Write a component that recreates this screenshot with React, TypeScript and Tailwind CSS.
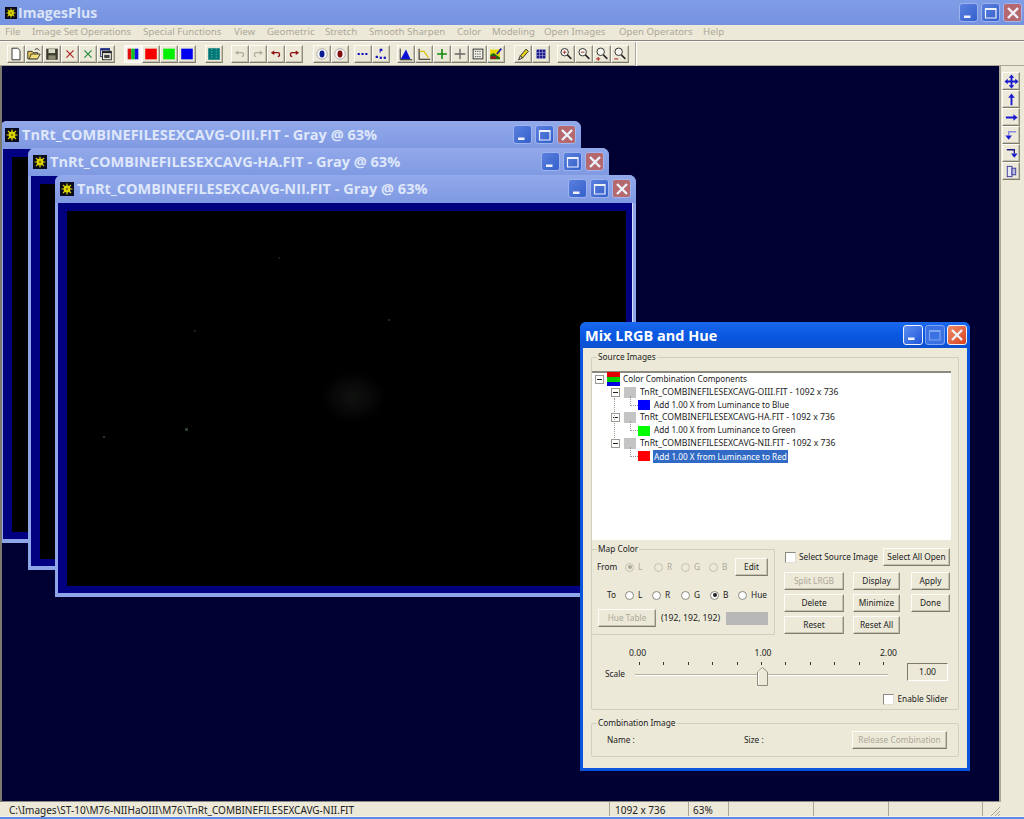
import React from "react";

const ui = "font-['Noto_Sans','Liberation_Sans',sans-serif]";
const title = "font-['Open_Sans','Liberation_Sans',sans-serif] font-bold";

function Sun({ className }: { className: string }) {
  return (
    <svg viewBox="0 0 14 14" className={className}>
      <rect width="14" height="14" fill="#0b0b20" />
      <circle cx="7" cy="7" r="3.4" fill="#e8e000" />
      <g stroke="#d8d000" strokeWidth="1.2">
        <path d="M7 1.5V12.5M1.5 7H12.5M3 3L11 11M11 3L3 11" />
      </g>
      <circle cx="7" cy="7" r="1.2" fill="#8a8200" />
    </svg>
  );
}

function CapBtn({ kind, variant }: { kind: "min" | "max" | "close"; variant: "main" | "child" | "dialog" }) {
  const base =
    "flex items-center justify-center rounded-[3px] border " +
    (variant === "dialog" ? "w-[20px] h-[20px] " : "w-[19px] h-[19px] ");
  const look =
    variant === "dialog"
      ? kind === "close"
        ? "bg-gradient-to-br from-[#ee8a66] to-[#d8401c] border-[#f2f2f2]"
        : kind === "max"
          ? "bg-[#3a72e4] border-[#7ea4f0]"
          : "bg-gradient-to-br from-[#5d8ef2] to-[#1f55d8] border-[#f2f2f2]"
      : kind === "close"
        ? "bg-[#b5696f] border-[#a4b6ec]"
        : "bg-gradient-to-br from-[#5a80de] to-[#3560cc] border-[#9db3ee]";
  const ink = variant === "dialog" && kind === "max" ? "#7ea4f0" : "#eef1fa";
  return (
    <div className={base + look}>
      <svg viewBox="0 0 16 16" className="w-[16px] h-[16px]">
        {kind === "min" && <rect x="3" y="10.5" width="6.5" height="2.5" fill={ink} />}
        {kind === "max" && (
          <path d="M2.5 3.5H13V13H2.5Z M2.5 4.5H13" fill="none" stroke={ink} strokeWidth="1.2" />
        )}
        {kind === "max" && <rect x="2.5" y="3" width="10.5" height="2" fill={ink} />}
        {kind === "close" && <path d="M3 3L13 13M13 3L3 13" stroke={ink} strokeWidth="2.4" />}
      </svg>
    </div>
  );
}

function Raised({ className, children }: { className: string; children?: React.ReactNode }) {
  return (
    <div
      className={
        "flex items-center justify-center bg-[#ece9d8] border border-t-[#fdfcf6] border-l-[#fdfcf6] border-r-[#8e8c7e] border-b-[#7c7a6c] shadow-[inset_-1px_-1px_0_#c6c3b0] " +
        className
      }
    >
      {children}
    </div>
  );
}

type IconName =
  | "new" | "open" | "save" | "xr" | "xg" | "win" | "rgb" | "red" | "green" | "blue" | "teal"
  | "ug" | "rg" | "ur" | "rr" | "eb" | "er" | "dots" | "pdots" | "hist" | "curve" | "plus"
  | "cross" | "calc" | "pic" | "pen" | "grid" | "zi" | "zo" | "zi2" | "zo2";

function Undo({ c, flip }: { c: string; flip?: boolean }) {
  return (
    <g transform={flip ? "translate(18 0) scale(-1 1)" : undefined}>
      <path d="M5 7.5H11C13.5 7.5 14 11.5 11 12" fill="none" stroke={c} strokeWidth="1.5" />
      <path d="M3.2 7.5L7 5V10Z" fill={c} />
    </g>
  );
}

function Zoom({ sign, low }: { sign: "+" | "-"; low?: boolean }) {
  const c = "#a82828";
  return (
    <g>
      <circle cx="7.5" cy={low ? 6.5 : 7} r="4.2" fill="#f7f7f2" stroke="#222" strokeWidth="1" />
      <path d="M10.5 10L15 14.5" stroke="#222" strokeWidth="1.7" />
      {!low && <path d="M5.5 7H9.5" stroke={c} strokeWidth="1" />}
      {!low && sign === "+" && <path d="M7.5 5V9" stroke={c} strokeWidth="1" />}
      {low && <path d="M2.5 14.5H7" stroke={c} strokeWidth="1.2" />}
      {low && sign === "+" && <path d="M4.75 12.3V16.5" stroke={c} strokeWidth="1.2" />}
    </g>
  );
}

function ToolIcon({ n }: { n: IconName }) {
  switch (n) {
    case "new":
      return <path d="M4.5 2.5H11L13.5 5V15.5H4.5Z" fill="#fff" stroke="#222" />;
    case "open":
      return (
        <g>
          <path d="M2 6H7L8 7.5H13V14.5H2Z" fill="#e0c050" stroke="#333" />
          <path d="M3.5 14.5L6 9H16L13 14.5Z" fill="#f2dd78" stroke="#333" />
          <path d="M10 4C12 2.5 14 3 15 5" fill="none" stroke="#222" />
        </g>
      );
    case "save":
      return (
        <g>
          <rect x="2.5" y="3" width="13" height="12.5" fill="#3a3a2c" />
          <rect x="5" y="3.5" width="7.5" height="4.5" fill="#d8d8c8" />
          <rect x="5" y="10.5" width="8" height="5" fill="#8a8a70" />
        </g>
      );
    case "xr":
      return <path d="M5 5L13 13M13 5L5 13" stroke="#a82020" strokeWidth="1.3" />;
    case "xg":
      return <path d="M5 5L13 13M13 5L5 13" stroke="#1c8a3a" strokeWidth="1.3" />;
    case "win":
      return (
        <g>
          <rect x="3" y="3" width="10" height="9" fill="#e8e8e0" stroke="#1c2a6a" />
          <rect x="3" y="3" width="10" height="2" fill="#1c2a8a" />
          <rect x="5" y="6" width="10" height="9.5" fill="#e8e8e0" stroke="#222" />
          <rect x="5" y="6" width="10" height="2" fill="#222" />
          <rect x="7" y="10" width="6" height="3.5" fill="#444" />
        </g>
      );
    case "rgb":
      return (
        <g>
          <rect x="3" y="3" width="4" height="12" fill="#e01010" />
          <rect x="7" y="3" width="4" height="12" fill="#10c020" />
          <rect x="11" y="3" width="4" height="12" fill="#1010e0" />
        </g>
      );
    case "red":
      return <rect x="2.5" y="3" width="13" height="12" fill="#f80000" />;
    case "green":
      return <rect x="2.5" y="3" width="13" height="12" fill="#00f000" />;
    case "blue":
      return <rect x="2.5" y="3" width="13" height="12" fill="#0000f0" />;
    case "teal":
      return (
        <g>
          <rect x="2.5" y="2.5" width="13" height="13" fill="#007878" />
          <path d="M6.5 3V15M11.5 3V15" stroke="#9ad0d0" strokeDasharray="1 2" />
        </g>
      );
    case "ug":
      return <Undo c="#b0ad9f" />;
    case "rg":
      return <Undo c="#b0ad9f" flip />;
    case "ur":
      return <Undo c="#8a1010" />;
    case "rr":
      return <Undo c="#8a1010" flip />;
    case "eb":
      return (
        <g>
          <circle cx="9" cy="9" r="6" fill="#f4f4f4" stroke="#aaa" />
          <ellipse cx="9" cy="9" rx="2.8" ry="3.8" fill="#0a1a90" />
        </g>
      );
    case "er":
      return (
        <g>
          <circle cx="9" cy="9" r="6" fill="#f4f4f4" stroke="#aaa" />
          <ellipse cx="9" cy="9" rx="2.8" ry="3.8" fill="#800a0a" />
        </g>
      );
    case "dots":
      return <path d="M3 9H15" stroke="#1010c0" strokeWidth="2" strokeDasharray="2.4 1.9" />;
    case "pdots":
      return (
        <g fill="#1010c0">
          <path d="M7.5 3H10.5V5.5H8.5V7.5H7.5Z" />
          <rect x="3" y="11" width="2.5" height="2.5" />
          <rect x="7.5" y="12" width="2.5" height="2.5" />
          <rect x="12" y="12" width="2.5" height="2.5" />
        </g>
      );
    case "hist":
      return (
        <g>
          <path d="M3 15L9 4L14 15Z" fill="#0810d8" />
          <path d="M2.5 3V15.5H16" fill="none" stroke="#111" />
        </g>
      );
    case "curve":
      return (
        <g>
          <path d="M3.5 3V15H16" fill="none" stroke="#222" strokeWidth="1.2" />
          <path d="M4 6H9L14 13" fill="none" stroke="#d8c000" strokeWidth="1.3" />
        </g>
      );
    case "plus":
      return <path d="M9 3.5V14.5M3.5 9H14.5" stroke="#128a12" strokeWidth="1.8" />;
    case "cross":
      return <path d="M9 3V15M3 9H15" stroke="#666" strokeWidth="1.5" />;
    case "calc":
      return (
        <g>
          <rect x="3.5" y="3.5" width="11" height="11" fill="#f2f2ea" stroke="#222" />
          <path d="M5.5 6H12.5M5.5 9H12.5M5.5 12H12.5" stroke="#333" strokeDasharray="1.5 1" />
        </g>
      );
    case "pic":
      return (
        <g>
          <rect x="2.5" y="4" width="11" height="11" fill="#e8d800" />
          <path d="M2.5 15V10L6 8L13.5 13V15Z" fill="#186818" />
          <rect x="3" y="11.5" width="6" height="3" fill="#a01030" />
          <path d="M10 9L15 3" stroke="#2020a0" strokeWidth="2" />
        </g>
      );
    case "pen":
      return (
        <g>
          <path d="M6 11L12.5 3.5L15 6L8.5 13.5Z" fill="#e8d020" stroke="#222" />
          <path d="M6 11L4 15.5L8.5 13.5Z" fill="#f4e8c0" stroke="#222" />
        </g>
      );
    case "grid":
      return (
        <g>
          <rect x="4" y="4" width="10" height="10" fill="#1a1a90" />
          <path d="M7.3 4V14M10.6 4V14M4 7.3H14M4 10.6H14" stroke="#a8a8d8" strokeWidth=".7" />
        </g>
      );
    case "zi":
      return <Zoom sign="+" />;
    case "zo":
      return <Zoom sign="-" />;
    case "zi2":
      return <Zoom sign="+" low />;
    case "zo2":
      return <Zoom sign="-" low />;
  }
}

function ToolBtn({ n, pressed }: { n: IconName; pressed?: boolean }) {
  return (
    <Raised
      className={
        "w-[18px] h-[18px] " +
        (pressed ? "border-t-[#8e8c7e] border-l-[#8e8c7e] border-r-[#fdfcf6] border-b-[#fdfcf6] shadow-none bg-[#f6f5ee]" : "")
      }
    >
      <svg viewBox="0 0 18 18" className="w-[16px] h-[16px]">
        <ToolIcon n={n} />
      </svg>
    </Raised>
  );
}

const groups: { names: IconName[]; cls: string }[] = [
  { names: ["new", "open", "save", "xr", "xg", "win"], cls: "ml-[7px]" },
  { names: ["rgb", "red", "green", "blue"], cls: "ml-[9px]" },
  { names: ["teal"], cls: "ml-[9px]" },
  { names: ["ug", "rg", "ur", "rr"], cls: "ml-[8px]" },
  { names: ["eb", "er"], cls: "ml-[10px]" },
  { names: ["dots", "pdots"], cls: "ml-[5px]" },
  { names: ["hist", "curve", "plus", "cross", "calc", "pic"], cls: "ml-[7px]" },
  { names: ["pen", "grid"], cls: "ml-[9px]" },
  { names: ["zi", "zo", "zi2", "zo2"], cls: "ml-[7px]" },
];

const menus: [string, string][] = [
  ["File", "w-[27px]"],
  ["Image Set Operations", "w-[111px]"],
  ["Special Functions", "w-[91px]"],
  ["View", "w-[33px]"],
  ["Geometric", "w-[58px]"],
  ["Stretch", "w-[44px]"],
  ["Smooth Sharpen", "w-[88px]"],
  ["Color", "w-[35px]"],
  ["Modeling", "w-[52px]"],
  ["Open Images", "w-[75px]"],
  ["Open Operators", "w-[84px]"],
  ["Help", "w-[30px]"],
];

function ChildWindow({ name, pos, image }: { name: string; pos: string; image?: boolean }) {
  return (
    <div className={"absolute w-[581px] h-[422px] rounded-t-[7px] bg-[#8ea6e8] flex flex-col px-[3px] pb-[4px] " + pos}>
      <div className="h-[28px] shrink-0 flex items-center bg-gradient-to-b from-[#92a9ea] to-[#7f99e2] -mx-[3px] px-[5px] rounded-t-[7px]">
        <Sun className="w-[14px] h-[14px] shrink-0" />
        <span className={"ml-[3px] text-[14.5px] leading-none whitespace-nowrap text-[#dfe7fa] " + title}>{name}</span>
        <div className="ml-auto flex gap-[3px] -mt-[1px]">
          <CapBtn kind="min" variant="child" />
          <CapBtn kind="max" variant="child" />
          <CapBtn kind="close" variant="child" />
        </div>
      </div>
      <div className="flex-1 min-h-0 bg-[#000080] border-r border-r-[#d8e0f6] pt-[8px] pb-[7px] pl-[9px] pr-[6px] flex">
        <div className="relative flex-1 bg-black overflow-hidden">
          {image && (
            <svg viewBox="0 0 557 375" className="absolute inset-0 w-full h-full">
              <defs>
                <radialGradient id="neb">
                  <stop offset="0" stopColor="#101210" />
                  <stop offset="1" stopColor="#000" />
                </radialGradient>
              </defs>
              <ellipse cx="285" cy="186" rx="32" ry="26" fill="url(#neb)" />
              <rect x="117" y="217" width="3" height="3" fill="#2e3e2e" />
              <rect x="35" y="225" width="2" height="2" fill="#2a302a" />
              <rect x="320" y="108" width="2" height="2" fill="#262626" />
              <rect x="210" y="46" width="2" height="2" fill="#1a1a1a" />
              <rect x="126" y="119" width="2" height="2" fill="#1c1c1c" />
            </svg>
          )}
        </div>
      </div>
    </div>
  );
}

function Group({ label, className, children }: { label: string; className: string; children?: React.ReactNode }) {
  return (
    <div className={"relative border border-[#d0d0bf] rounded-[2px] " + className}>
      <span className="absolute left-[5px] -top-[7px] bg-[#ece9d8] px-[1px] text-[8.3px] leading-[12px] text-[#222]">{label}</span>
      {children}
    </div>
  );
}

function Btn({ label, w, off, ml }: { label: string; w: string; off?: boolean; ml?: string }) {
  return (
    <Raised className={"h-[18px] text-[8.3px] leading-none whitespace-nowrap " + w + " " + (ml ?? "") + (off ? " text-[#aca899]" : " text-[#222]")}>
      {label}
    </Raised>
  );
}

function Radio({ label, on, off, gap }: { label: string; on?: boolean; off?: boolean; gap: string }) {
  return (
    <div className={"flex items-center text-[8.3px] leading-none " + gap + (off ? " text-[#aca899]" : " text-[#222]")}>
      <div className={"w-[9px] h-[9px] rounded-full border flex items-center justify-center " + (off ? "border-[#c4c1b0] bg-[#ece9d8]" : "border-[#8a8a80] bg-white")}>
        {on && <div className={"w-[4px] h-[4px] rounded-full " + (off ? "bg-[#aca899]" : "bg-[#222]")} />}
      </div>
      <span className="ml-[4px]">{label}</span>
    </div>
  );
}

function Check({ label, cls }: { label: string; cls: string }) {
  return (
    <div className={"flex items-center text-[8.3px] leading-none text-[#222] " + cls}>
      <div className="w-[11px] h-[11px] shrink-0 bg-white border border-[#8a8a80] border-b-[#e0dfd4] border-r-[#e0dfd4]" />
      <span className="ml-[3px] whitespace-nowrap">{label}</span>
    </div>
  );
}

function Expander() {
  return (
    <div className="w-[9px] h-[9px] border border-[#9a9a90] bg-white flex items-center justify-center shrink-0">
      <div className="w-[5px] h-[1px] bg-[#222]" />
    </div>
  );
}

function TreeFile({ text }: { text: string }) {
  return (
    <div className="h-[12.8px] flex items-center pl-[19px]">
      <Expander />
      <div className="ml-[4px] w-[12px] h-[11px] bg-[#c4c4c4] shrink-0" />
      <span className="ml-[4px] text-[8.65px] whitespace-nowrap">{text}</span>
    </div>
  );
}

function TreeAdd({ text, swatch, selected }: { text: string; swatch: string; selected?: boolean }) {
  return (
    <div className="relative h-[12.8px] flex items-center pl-[46px]">
      <div className="absolute left-[38px] -top-[3px] w-[8px] h-[10px] border-l border-b border-dotted border-[#9a9a90]" />
      <div className={"w-[12px] h-[10px] shrink-0 " + swatch} />
      <span className={"ml-[3px] px-[1px] whitespace-nowrap " + (selected ? "bg-[#316ac5] text-white leading-[13px]" : "")}>{text}</span>
    </div>
  );
}

function Dialog() {
  return (
    <div className={"absolute left-[578px] top-[256px] w-[390px] h-[449px] bg-[#0b55dc] rounded-t-[6px] flex flex-col px-[3px] pb-[3px] " + ui}>
      <div className="h-[26px] shrink-0 flex items-center -mx-[3px] pl-[5px] pr-[3px] rounded-t-[6px] bg-gradient-to-b from-[#1a68ee] via-[#0a58e2] to-[#0b50d0]">
        <span className={"mt-[3px] text-[14.5px] leading-none text-white whitespace-nowrap " + title}>Mix LRGB and Hue</span>
        <div className="ml-auto flex gap-[2px]">
          <CapBtn kind="min" variant="dialog" />
          <CapBtn kind="max" variant="dialog" />
          <CapBtn kind="close" variant="dialog" />
        </div>
      </div>
      <div className="flex-1 bg-[#ece9d8] pl-[8px] pr-[8px] pt-[9px] flex flex-col">
        <Group label="Source Images" className="h-[353px] pt-[13px] pr-[7px] flex flex-col">
          <div className="relative h-[169px] shrink-0 bg-white border-t-2 border-t-[#8a8a80] text-[8.2px] text-[#222]">
            <div className="absolute left-[22px] top-[25px] h-[42px] border-l border-dotted border-l-[#9a9a90]" />
            <div className="h-[12.8px] flex items-center pl-[3px]">
              <Expander />
              <div className="ml-[3px] w-[13px] h-[14px] shrink-0 flex flex-col">
                <div className="flex-1 bg-[#e00000]" />
                <div className="flex-1 bg-[#00d000]" />
                <div className="flex-1 bg-[#0000e0]" />
              </div>
              <span className="ml-[3px] whitespace-nowrap">Color Combination Components</span>
            </div>
            <TreeFile text="TnRt_COMBINEFILESEXCAVG-OIII.FIT - 1092 x 736" />
            <TreeAdd text="Add 1.00 X from Luminance to Blue" swatch="bg-[#0000ff]" />
            <TreeFile text="TnRt_COMBINEFILESEXCAVG-HA.FIT - 1092 x 736" />
            <TreeAdd text="Add 1.00 X from Luminance to Green" swatch="bg-[#00ff00]" />
            <TreeFile text="TnRt_COMBINEFILESEXCAVG-NII.FIT - 1092 x 736" />
            <TreeAdd text="Add 1.00 X from Luminance to Red" swatch="bg-[#ff0000]" selected />
          </div>
          <div className="flex mt-[9px] -ml-[1px]">
            <Group label="Map Color" className="w-[184px] h-[86px] shrink-0 flex flex-col text-[8.3px] text-[#222]">
              <div className="flex items-center h-[18px] mt-[8px] pl-[5px]">
                <span className="w-[28px] leading-none">From</span>
                <Radio label="L" on off gap="w-[29px]" />
                <Radio label="R" off gap="w-[27px]" />
                <Radio label="G" off gap="w-[28px]" />
                <Radio label="B" off gap="w-[26px]" />
                <Btn label="Edit" w="w-[33px]" />
              </div>
              <div className="flex items-center h-[18px] mt-[10px] pl-[15px]">
                <span className="w-[18px] leading-none">To</span>
                <Radio label="L" gap="w-[27px]" />
                <Radio label="R" gap="w-[29px]" />
                <Radio label="G" gap="w-[29px]" />
                <Radio label="B" on gap="w-[28px]" />
                <Radio label="Hue" gap="" />
              </div>
              <div className="flex items-center mt-[5px] pl-[6px]">
                <Btn label="Hue Table" w="w-[58px]" off />
                <span className="ml-[5px] w-[65px] text-[8.7px] leading-none whitespace-nowrap">(192, 192, 192)</span>
                <div className="w-[42px] h-[13px] bg-[#b8b8b8]" />
              </div>
            </Group>
            <div className="ml-[9px] flex flex-col w-[166px] -mt-[1px]">
              <div className="flex items-center h-[18px]">
                <Check label="Select Source Image" cls="w-[98px] ml-[1px]" />
                <Btn label="Select All Open" w="w-[67px]" />
              </div>
              <div className="flex mt-[6px]">
                <Btn label="Split LRGB" w="w-[60px]" off />
                <Btn label="Display" w="w-[47px]" ml="ml-[9px]" />
                <Btn label="Apply" w="w-[39px]" ml="ml-[11px]" />
              </div>
              <div className="flex mt-[4px]">
                <Btn label="Delete" w="w-[60px]" />
                <Btn label="Minimize" w="w-[47px]" ml="ml-[9px]" />
                <Btn label="Done" w="w-[39px]" ml="ml-[11px]" />
              </div>
              <div className="flex mt-[4px]">
                <Btn label="Reset" w="w-[60px]" />
                <Btn label="Reset All" w="w-[47px]" ml="ml-[9px]" />
              </div>
            </div>
          </div>
          <div className="flex text-[8.6px] leading-none text-[#222] mt-[12px] pl-[13px]">
            <div className="flex flex-col w-[283px] shrink-0">
              <div className="h-[12px] flex justify-between leading-[12px] ml-[24px] w-[268px] shrink-0">
                <span>0.00</span>
                <span>1.00</span>
                <span>2.00</span>
              </div>
              <div className="flex items-start mt-[3px]">
                <span className="mt-[8px] w-[30px] shrink-0 text-[8.3px]">Scale</span>
                <div className="relative w-[253px] h-[24px] shrink-0">
                  <div className="flex justify-between pl-[4px] pr-[4px]">
                    {Array.from({ length: 11 }).map((_, i) => (
                      <div key={i} className="w-[1px] h-[3px] bg-[#333]" />
                    ))}
                  </div>
                  <div className="mt-[9px] h-[2px] bg-[#b4b1a0] border-b border-b-white" />
                  <svg viewBox="0 0 11 19" className="absolute left-[122px] top-[5px] w-[11px] h-[19px]">
                    <path d="M.5 5L5.5 .5L10.5 5V18.5H.5Z" fill="#ece9d8" stroke="#8e8c7e" />
                    <path d="M1.5 5L5.5 1.5" stroke="#fff" fill="none" />
                    <path d="M1.5 5.5V17" stroke="#fff" />
                  </svg>
                </div>
              </div>
            </div>
            <div className="flex flex-col items-end w-[60px] shrink-0">
              <div className="mt-[16px] w-[41px] h-[18px] border border-[#7c7a6c] border-b-white border-r-white flex items-center justify-center">1.00</div>
              <Check label="Enable Slider" cls="mt-[13px]" />
            </div>
          </div>
        </Group>
        <Group label="Combination Image" className="mt-[13px] h-[34px] flex items-center text-[8.3px] text-[#222] pl-[15px] pr-[11px] w-[368px]">
          <span className="leading-none w-[137px]">Name :</span>
          <span className="leading-none">Size :</span>
          <Btn label="Release Combination" w="w-[95px] ml-auto" off />
        </Group>
      </div>
    </div>
  );
}

function SideIcon({ i }: { i: number }) {
  const c = "#1a1ad0";
  return (
    <svg viewBox="0 0 16 16" className="w-[15px] h-[15px]">
      {i === 0 && (
        <g fill={c}>
          <path d="M8 0.5L11 4H9V7H12V5L15.5 8L12 11V9H9V12H11L8 15.5L5 12H7V9H4V11L0.5 8L4 5V7H7V4H5Z" />
        </g>
      )}
      {i === 1 && <path d="M8 1.5L11.5 6H9V14H7V6H4.5Z" fill={c} />}
      {i === 2 && <path d="M14.5 8L10 4.5V7H2V9H10V11.5Z" fill={c} />}
      {i === 3 && (
        <g>
          <path d="M13 4H5V8" fill="none" stroke="#8a8ae0" strokeWidth="1.5" />
          <path d="M1.5 8H8.5L5 12.5Z" fill={c} />
        </g>
      )}
      {i === 4 && (
        <g>
          <path d="M3 4H11V8" fill="none" stroke="#1a1a80" strokeWidth="1.4" />
          <path d="M7.5 8H14.5L11 12.5Z" fill={c} />
        </g>
      )}
      {i === 5 && (
        <g>
          <rect x="3.5" y="2.5" width="5" height="11" fill="#e8e8f4" stroke="#3a3aa0" />
          <rect x="8.5" y="4.5" width="4" height="7" fill="#b8b8dc" stroke="#3a3aa0" />
        </g>
      )}
    </svg>
  );
}

export default function App() {
  return (
    <div className={"w-[1024px] h-[819px] flex flex-col overflow-hidden bg-[#ece9d8] " + ui}>
      <div className="h-[25px] shrink-0 flex items-center pl-[5px] pr-[2px] bg-gradient-to-b from-[#7f9de6] via-[#7b97e2] to-[#7492e0]">
        <Sun className="w-[12px] h-[12px]" />
        <span className={"ml-[1px] text-[14px] leading-none text-[#dbe4f8] " + title}>ImagesPlus</span>
        <div className="ml-auto flex gap-[3px]">
          <CapBtn kind="min" variant="main" />
          <CapBtn kind="max" variant="main" />
          <CapBtn kind="close" variant="main" />
        </div>
      </div>
      <div className="h-[16px] shrink-0 flex items-center pl-[5px] pb-[1px] text-[9.7px] leading-none text-[#aca899] border-b border-b-[#86847a]">
        {menus.map(([m, w]) => (
          <span key={m} className={"whitespace-nowrap " + w}>{m}</span>
        ))}
      </div>
      <div className="h-[25px] shrink-0 flex items-center border-t border-t-[#fbfaf4] border-b border-b-[#aca899]">
        {groups.map((g, i) => (
          <div key={i} className={"flex " + g.cls}>
            {g.names.map((n) => (
              <ToolBtn key={n} n={n} pressed={n === "rgb"} />
            ))}
          </div>
        ))}
        <div className="ml-[6px] h-[24px] w-[2px] border-l border-l-[#aca899] border-r border-r-white" />
      </div>
      <div className="flex-1 min-h-0 flex">
        <div className="w-[2px] bg-[#7c7a6c]" />
        <div className="relative flex-1 bg-[#000033] border-b border-b-[#8a8a80] overflow-hidden">
          <ChildWindow name="TnRt_COMBINEFILESEXCAVG-OIII.FIT - Gray @ 63%" pos="-left-[2px] top-[55px]" />
          <ChildWindow name="TnRt_COMBINEFILESEXCAVG-HA.FIT - Gray @ 63%" pos="left-[26px] top-[82px]" />
          <ChildWindow name="TnRt_COMBINEFILESEXCAVG-NII.FIT - Gray @ 63%" pos="left-[53px] top-[109px]" image />
          <Dialog />
        </div>
        <div className="w-[25px] shrink-0 border-l-2 border-l-[#aca899] pt-[6px] pl-[1px] flex flex-col">
          {[0, 1, 2, 3, 4, 5].map((i) => (
            <Raised key={i} className="w-[18px] h-[18px]">
              <SideIcon i={i} />
            </Raised>
          ))}
        </div>
      </div>
      <div className="h-[15px] shrink-0 flex items-center text-[10px] leading-none text-[#222] border-b border-b-[#f5f3e8]">
        <div className="w-[609px] pl-[9px] pt-[2px] whitespace-nowrap">C:\Images\ST-10\M76-NIIHaOIII\M76\TnRt_COMBINEFILESEXCAVG-NII.FIT</div>
        <div className="w-[79px] h-full pl-[5px] pt-[2px] flex items-center border-l border-l-[#aca899]">1092 x 736</div>
        <div className="w-[40px] h-full pl-[4px] pt-[2px] flex items-center border-l border-l-[#aca899]">63%</div>
        <div className="w-[85px] h-full border-l border-l-[#aca899]" />
        <div className="w-[75px] h-full border-l border-l-[#aca899]" />
        <div className="w-[94px] h-full border-l border-l-[#aca899]" />
        <div className="flex-1 h-full border-l border-l-[#aca899] flex items-end justify-end">
          <svg viewBox="0 0 12 12" className="w-[12px] h-[12px] mr-[24px]">
            <path d="M3 12L12 3M7 12L12 7M10 12L12 10" stroke="#aca899" />
          </svg>
        </div>
      </div>
      <div className="h-[2px] shrink-0 bg-[#5f8be4]" />
    </div>
  );
}
